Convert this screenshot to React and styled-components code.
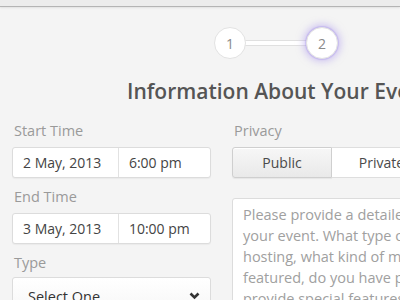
import React from "react";
import styled, { createGlobalStyle } from "styled-components";

const GlobalStyle = createGlobalStyle`
  html, body {
    margin: 0;
    padding: 0;
    background: #f4f4f4;
    overflow: hidden;
  }
  body {
    font-family: "Open Sans", "Noto Sans", sans-serif;
  }
`;

const Page = styled.div`
  width: 400px;
  height: 300px;
  overflow: hidden;
  background: #f4f4f4;
`;

const TopBar = styled.div`
  height: 6px;
  background: #ececec;
  border-bottom: 1px solid #b4b4b4;
  box-shadow: 0 1px 2px rgba(0, 0, 0, 0.08);
`;

const Steps = styled.div`
  display: flex;
  align-items: center;
  padding: 20px 0 0 214px;
  height: 32px;
`;

const StepDot = styled.div`
  width: 30px;
  height: 30px;
  border-radius: 50%;
  background: #fff;
  border: 1px solid #e2e2e2;
  display: flex;
  align-items: center;
  justify-content: center;
  font-size: 14px;
  color: #8a8a8a;
  flex-shrink: 0;
  position: relative;
  z-index: 1;
  box-shadow: ${(p) =>
    p.active
      ? "0 0 7px 3px rgba(175, 155, 240, 0.5), 0 0 1px 1px rgba(150, 130, 230, 0.35)"
      : "none"};
`;

const StepLine = styled.div`
  width: 62px;
  height: 4px;
  margin: 0 -1px;
  background: #fff;
  border-top: 1px solid #e0e0e0;
  border-bottom: 1px solid #e0e0e0;
`;

const Title = styled.h1`
  margin: 0;
  padding: 17px 0 0 127px;
  font-size: 21px;
  font-weight: 600;
  color: #555;
  white-space: nowrap;
  line-height: 30px;
`;

const Form = styled.div`
  display: grid;
  grid-template-columns: 199px 200px;
  column-gap: 21px;
  padding: 15px 0 0 12px;
`;

const Column = styled.div`
  display: flex;
  flex-direction: column;
`;

const Label = styled.div`
  font-size: 14.5px;
  color: #9a9a9a;
  line-height: 19px;
  padding-left: 2px;
  margin-bottom: ${(p) => p.gap || 7}px;
`;

const Field = styled.div`
  display: flex;
  height: 29px;
  background: #fff;
  border: 1px solid #dcdcdc;
  border-radius: 3px;
  box-shadow: 0 1px 1px rgba(0, 0, 0, 0.04);
  margin-bottom: ${(p) => p.after || 0}px;
`;

const Cell = styled.div`
  display: flex;
  align-items: center;
  width: ${(p) => p.w}px;
  padding-left: 10px;
  font-size: 14px;
  color: #444;
  border-right: ${(p) => (p.divider ? "1px solid #e2e2e2" : "none")};
  box-sizing: border-box;
`;

const Select = styled.div`
  display: flex;
  align-items: center;
  justify-content: space-between;
  height: 34px;
  margin-top: 1px;
  padding: 4px 10px 0 15px;
  background: linear-gradient(#ffffff, #f7f7f7);
  border: 1px solid #dcdcdc;
  border-radius: 3px;
  font-size: 14.5px;
  color: #333;
  box-sizing: border-box;
`;

const Segmented = styled.div`
  display: flex;
  height: 31px;
  margin-bottom: 20px;
`;

const Segment = styled.div`
  display: flex;
  align-items: center;
  justify-content: center;
  width: ${(p) => p.w}px;
  flex-shrink: 0;
  box-sizing: border-box;
  font-size: 14px;
  color: #4a4a4a;
  border: 1px solid ${(p) => (p.selected ? "#cfcfcf" : "#dedede")};
  border-left: ${(p) => (p.selected ? "1px solid #cfcfcf" : "none")};
  border-radius: ${(p) => (p.selected ? "3px 0 0 3px" : "0 3px 3px 0")};
  background: ${(p) =>
    p.selected ? "linear-gradient(#f7f7f7, #e9e9e9)" : "#fff"};
  box-shadow: ${(p) =>
    p.selected ? "inset 0 1px 0 #fff, 0 1px 1px rgba(0,0,0,0.06)" : "none"};
`;

const TextArea = styled.div`
  height: 120px;
  width: 240px;
  background: #fff;
  border: 1px solid #dcdcdc;
  border-radius: 3px;
  padding: 5px 0 0 10px;
  font-size: 14.5px;
  line-height: 21px;
  color: #a0a0a0;
  white-space: nowrap;
  overflow: hidden;
`;

const Chevron = () => (
  <svg width="11" height="8" viewBox="0 0 11 8">
    <path d="M1.5 1.5 L5.5 5.5 L9.5 1.5" fill="none" stroke="#333" strokeWidth="2.6" />
  </svg>
);

export default function App() {
  return (
    <Page>
      <GlobalStyle />
      <TopBar />
      <Steps>
        <StepDot>1</StepDot>
        <StepLine />
        <StepDot active>2</StepDot>
      </Steps>
      <Title>Information About Your Event</Title>
      <Form>
        <Column>
          <Label>Start Time</Label>
          <Field after={9}>
            <Cell w={107} divider>2 May, 2013</Cell>
            <Cell w={92}>6:00 pm</Cell>
          </Field>
          <Label>End Time</Label>
          <Field after={9}>
            <Cell w={107} divider>3 May, 2013</Cell>
            <Cell w={92}>10:00 pm</Cell>
          </Field>
          <Label gap={4}>Type</Label>
          <Select>
            Select One
            <Chevron />
          </Select>
        </Column>
        <Column>
          <Label>Privacy</Label>
          <Segmented>
            <Segment selected w={100}>Public</Segment>
            <Segment w={100}>Private</Segment>
          </Segmented>
          <TextArea>
            Please provide a detailed description of
            <br />
            your event. What type of event are you
            <br />
            hosting, what kind of music will be
            <br />
            featured, do you have performers or
            <br />
            provide special features?
          </TextArea>
        </Column>
      </Form>
    </Page>
  );
}
